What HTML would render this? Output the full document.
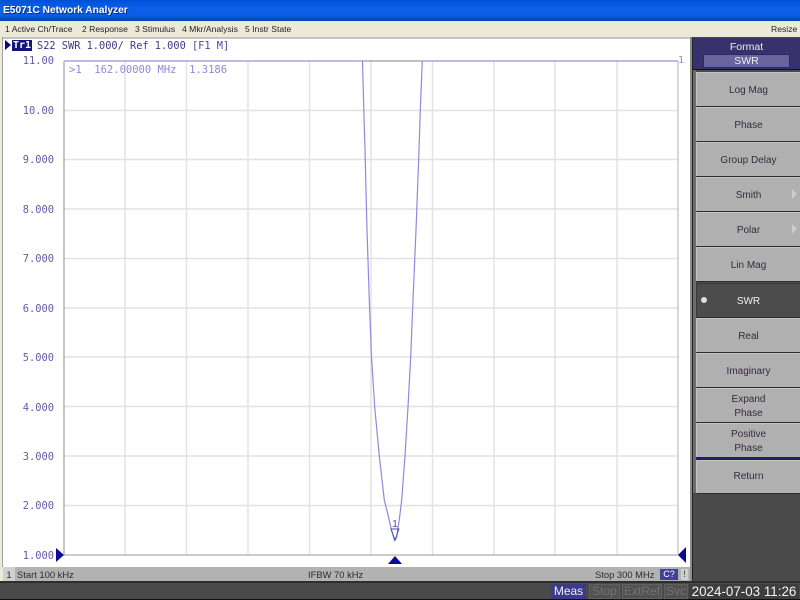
<!DOCTYPE html>
<html><head><meta charset="utf-8">
<style>
html,body{margin:0;padding:0;width:800px;height:600px;overflow:hidden;background:#4a4a4a}
*{box-sizing:border-box}
.a{position:absolute;white-space:nowrap}
#title{left:0;top:0;width:800px;height:21px;background:linear-gradient(180deg,#0050d8 0,#0a62ea 45%,#0a5ce2 75%,#0342b4 100%);color:#fff;font:bold 10.2px/21px "Liberation Sans",sans-serif;padding-left:3px;text-shadow:1px 1px 0 #03308a}
#menu{left:0;top:21px;width:800px;height:16px;background:#ece9d8;color:#222;font:8.6px/14px "Liberation Sans",sans-serif}
#menu span{position:absolute;top:1px}
.mono{font-family:"DejaVu Sans Mono","Liberation Mono",monospace;font-size:10.3px;color:#4a3f92}
.yl{width:51px;text-align:right;left:3px;font:10.4px/12px "DejaVu Sans Mono","Liberation Mono",monospace;color:#655aa8}
.key{position:absolute;left:696px;width:104px;height:34px;padding-top:2px;background:#b0b0b0;color:#352a40;text-align:center;font:10px/14px "Liberation Sans",sans-serif;display:flex;align-items:center;justify-content:center;border-top:1px solid #c4c4c4;border-left:1px solid #c4c4c4;box-shadow:0 1px 0 #2d2d2d}
.arr{position:absolute;right:3px;top:11px;width:0;height:0;border-left:5px solid #cdcdcd;border-top:5px solid transparent;border-bottom:5px solid transparent}
.st{font:9.4px/15px "Liberation Sans",sans-serif;color:#2c2c2c}
.bs{position:absolute;top:584px;height:15px;font:12px/15px "Liberation Sans",sans-serif;text-align:center;background:#525252;color:#737373;box-shadow:inset 0 0 0 1px #626262}
</style></head><body>
<div class="a" id="title">E5071C Network Analyzer</div>
<div class="a" id="menu">
<span style="left:5px">1 Active Ch/Trace</span>
<span style="left:82px">2 Response</span>
<span style="left:135px">3 Stimulus</span>
<span style="left:182px">4 Mkr/Analysis</span>
<span style="left:245px">5 Instr State</span>
<span style="left:771px">Resize</span>
</div>
<div class="a" style="left:0;top:37px;width:692px;height:530px;background:#fff;border-top:2px solid #c4c4c4;border-right:2px solid #8c8c8c"></div>
<div class="a" style="left:0;top:37px;width:2px;height:530px;background:#ece9d8"></div>
<div class="a" style="left:2px;top:37px;width:1px;height:530px;background:#a0a0a0"></div>

<svg class="a" style="left:0;top:0" width="692" height="600" viewBox="0 0 692 600">
<g stroke="#e2e2e2" stroke-width="1.4" fill="none">
<path d="M125 61V555M186.500 61V555M248 61V555M309.500 61V555M371 61V555M432.500 61V555M494 61V555M555 61V555M617 61V555"/>
<path d="M64 110.500H678M64 159.500H678M64 209H678M64 258.500H678M64 308H678M64 357H678M64 406.500H678M64 456H678M64 505.500H678"/>
</g>
<path d="M64 61V555H678" stroke="#9a9a9a" stroke-width="1.100" fill="none"/>
<path d="M678 61V555" stroke="#bdbdbd" stroke-width="1.200" fill="none"/>
<path d="M64 61H362M423 61H678" stroke="#aca4e0" stroke-width="1.400" fill="none"/>
<path d="M362 61H423" stroke="#ababab" stroke-width="1.400" fill="none"/>
<polyline points="362.500,61 363.800,110 365,150 367,230 369.300,300 371.500,357 374.700,407 379.300,456 384.300,500 388,515 391.500,530 394.500,540.500 396.500,538 399.500,518 401.700,500 405,456 408,407 410.700,357 413,300 416,230 419,150 420.300,110 422.300,61" fill="none" stroke="#9088dc" stroke-width="1.200"/>
<path d="M391 529H399L395 540Z" fill="none" stroke="#4a4aa0" stroke-width="0.900"/>
<text x="395" y="527" text-anchor="middle" font-family="Liberation Sans" font-size="10" fill="#4a3f92">1</text>
<path d="M56 548L64 555L56 562Z" fill="#0a0a96"/>
<path d="M686 547L678 555L686 563Z" fill="#0a0a96"/>
<path d="M388 564L395 556L402 564Z" fill="#0a0a96"/>
<path d="M5 40L11 45L5 50Z" fill="#0a0a80"/>
<rect x="12" y="40" width="20" height="11" fill="#14147a"/>
</svg>

<div class="a" style="left:13px;top:40px;font:bold 10px/11px 'DejaVu Sans Mono','Liberation Mono',monospace;color:#fff">Tr1</div>
<div class="a mono" style="left:37px;top:40px;line-height:12px;color:#3f3a80">S22 SWR 1.000/ Ref 1.000 <span style="color:#5a3f9a">[F1 M]</span></div>
<div class="a mono" style="left:69px;top:64px;line-height:12px;font-size:10.5px;color:#9088d8">&gt;1&nbsp;&nbsp;162.00000 MHz&nbsp;&nbsp;1.3186</div>
<div class="a" style="left:678px;top:55px;font:10px/12px 'DejaVu Sans Mono',monospace;color:#9088d8">1</div>

<div class="a yl" style="top:55px">11.00</div>
<div class="a yl" style="top:105px">10.00</div>
<div class="a yl" style="top:154px">9.000</div>
<div class="a yl" style="top:204px">8.000</div>
<div class="a yl" style="top:253px">7.000</div>
<div class="a yl" style="top:303px">6.000</div>
<div class="a yl" style="top:352px">5.000</div>
<div class="a yl" style="top:402px">4.000</div>
<div class="a yl" style="top:451px">3.000</div>
<div class="a yl" style="top:500px">2.000</div>
<div class="a yl" style="top:550px">1.000</div>

<!-- status bar -->
<div class="a" style="left:3px;top:567px;width:687px;height:14px;background:#b2b2b2"></div>
<div class="a" style="left:0;top:567px;width:3px;height:15px;background:#ece9d8"></div>
<div class="a st" style="left:3px;top:567px;width:12px;height:14px;background:#d0d0d0;text-align:center">1</div>
<div class="a st" style="left:17px;top:567px">Start 100 kHz</div>
<div class="a st" style="left:308px;top:567px">IFBW 70 kHz</div>
<div class="a st" style="left:595px;top:567px">Stop 300 MHz</div>
<div class="a" style="left:660px;top:569px;width:18px;height:11px;background:#40409a;color:#fff;font:9px/11px 'Liberation Sans',sans-serif;text-align:center">C?</div>
<div class="a" style="left:681px;top:569px;width:7px;height:11px;background:#d0d0d0;color:#333;font:9px/11px 'Liberation Sans',sans-serif;text-align:center">!</div>
<div class="a" style="left:0;top:581px;width:800px;height:19px;background:#4a4a4a;border-top:2px solid #2e2e2e;border-bottom:1px solid #111"></div>

<!-- right panel -->
<div class="a" style="left:690px;top:37px;width:2px;height:544px;background:#8c8c8c"></div>
<div class="a" style="left:692px;top:37px;width:108px;height:544px;background:#4a4a4a;border-left:1px solid #222"></div>
<div class="a" style="left:693px;top:70px;width:3px;height:423px;background:#6c6c6c"></div>
<div class="a" style="left:693px;top:38px;width:107px;height:32px;background:#37326e;border-bottom:1px solid #111;color:#f0f0f0;text-align:center;font:10.5px/18px 'Liberation Sans',sans-serif;padding-top:0"><span style="position:relative;top:0">Format</span></div>
<div class="a" style="left:703px;top:54px;width:87px;height:14px;background:#69649c;border:1px solid #2c2860;color:#eee;text-align:center;font:10.5px/13px 'Liberation Sans',sans-serif">SWR</div>

<div class="key" style="top:72px">Log Mag</div>
<div class="key" style="top:107px">Phase</div>
<div class="key" style="top:142px">Group Delay</div>
<div class="key" style="top:177px">Smith<i class="arr"></i></div>
<div class="key" style="top:212px">Polar<i class="arr"></i></div>
<div class="key" style="top:247px">Lin Mag</div>
<div class="key" style="top:283px;background:#4c4c4c;color:#f0f0f0;border-color:#3a3a3a">SWR<i class="a" style="left:4px;top:13px;width:6px;height:6px;border-radius:50%;background:#ddd"></i></div>
<div class="key" style="top:318px">Real</div>
<div class="key" style="top:353px">Imaginary</div>
<div class="key" style="top:388px">Expand<br>Phase</div>
<div class="key" style="top:423px">Positive<br>Phase</div>
<div class="a" style="left:696px;top:457px;width:104px;height:3px;background:#202060"></div>
<div class="key" style="top:460px;height:33px;padding-top:0">Return</div>

<!-- bottom indicators -->
<div class="bs" style="left:551px;width:35px;background:#3c3a8c;color:#f0f0f0;box-shadow:none">Meas</div>
<div class="bs" style="left:589px;width:31px">Stop</div>
<div class="bs" style="left:622px;width:40px">ExtRef</div>
<div class="bs" style="left:664px;width:24px">Svc</div>
<div class="bs" style="left:689px;width:110px;background:#3e3e3e;color:#f4f4f4;box-shadow:none;font-size:13.400px">2024-07-03 11:26</div>
</body></html>
